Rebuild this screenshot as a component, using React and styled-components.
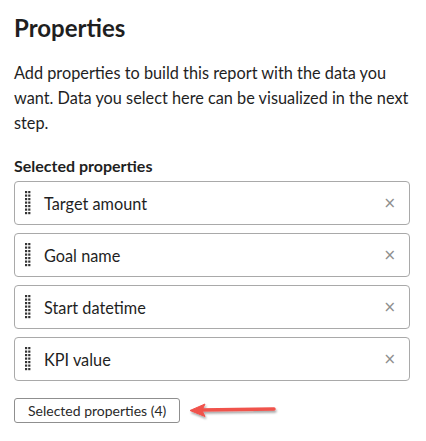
import React from 'react';
import styled, { createGlobalStyle } from 'styled-components';

const GlobalStyle = createGlobalStyle`
  body {
    margin: 0;
    background: #ffffff;
    font-family: "Lato", "Noto Sans", sans-serif;
    color: #1f1f1f;
  }
`;

const Panel = styled.div`
  padding: 13px 16px 0 14px;
  width: 426px;
  box-sizing: border-box;
`;

const Title = styled.h1`
  margin: 0;
  font-size: 24px;
  font-weight: 700;
  line-height: 30px;
`;

const Intro = styled.p`
  margin: 17px 0 0;
  font-size: 16.3px;
  line-height: 25px;
`;

const SectionTitle = styled.h2`
  margin: 20px 0 0;
  font-size: 16px;
  font-weight: 700;
  line-height: 22px;
`;

const List = styled.div`
  display: flex;
  flex-direction: column;
  gap: 8px;
  margin-top: 4px;
`;

const Row = styled.div`
  display: flex;
  align-items: center;
  height: 44px;
  box-sizing: border-box;
  border: 1px solid #a9a9a9;
  border-radius: 4px;
  padding: 0 13px 0 10px;
  width: 396px;
`;

const Label = styled.span`
  flex: 1;
  font-size: 16.3px;
  margin-left: 13px;
`;

const Remove = styled.button`
  border: none;
  background: none;
  padding: 0;
  color: #8e8e8e;
  font-size: 15px;
  line-height: 1;
  cursor: pointer;
  font-family: "DejaVu Sans", sans-serif;
`;

const Footer = styled.div`
  display: flex;
  align-items: center;
  margin-top: 17px;
  gap: 8px;
`;

const CountButton = styled.button`
  height: 25px;
  padding: 0 13px;
  border: 1px solid #8f8f8f;
  border-radius: 3px;
  background: #fff;
  font-family: "Lato", "Noto Sans", sans-serif;
  font-size: 14px;
  color: #2a2a2a;
  cursor: pointer;
`;

const Grip = () => (
  <svg width="6" height="24" viewBox="0 0 6 24">
    {[0, 1, 2, 3, 4, 5, 6].map((r) =>
      [0, 3.2].map((c) => (
        <rect key={r + '-' + c} x={c} y={r * 3.5} width="2.2" height="2.2" fill="#333" />
      ))
    )}
  </svg>
);

const Arrow = () => (
  <svg width="92" height="20" viewBox="0 0 92 20">
    <defs>
      <filter id="sh" x="-20%" y="-50%" width="140%" height="200%">
        <feDropShadow dx="1" dy="2" stdDeviation="1.2" floodColor="#000" floodOpacity="0.35" />
      </filter>
    </defs>
    <g filter="url(#sh)" fill="#f0524c" stroke="#f0524c">
      <line x1="12" y1="9" x2="86" y2="8" strokeWidth="3.5" strokeLinecap="round" />
      <polygon points="2,9.5 17,3 14,9.3 17,15.5" strokeWidth="1" strokeLinejoin="round" />
    </g>
  </svg>
);

const properties = ['Target amount', 'Goal name', 'Start datetime', 'KPI value'];

const App = () => (
  <Panel>
    <GlobalStyle />
    <Title>Properties</Title>
    <Intro>
      Add properties to build this report with the data you want. Data you select here can be
      visualized in the next step.
    </Intro>
    <SectionTitle>Selected properties</SectionTitle>
    <List>
      {properties.map((name) => (
        <Row key={name}>
          <Grip />
          <Label>{name}</Label>
          <Remove aria-label="Remove">×</Remove>
        </Row>
      ))}
    </List>
    <Footer>
      <CountButton>Selected properties ({properties.length})</CountButton>
      <Arrow />
    </Footer>
  </Panel>
);

export default App;
